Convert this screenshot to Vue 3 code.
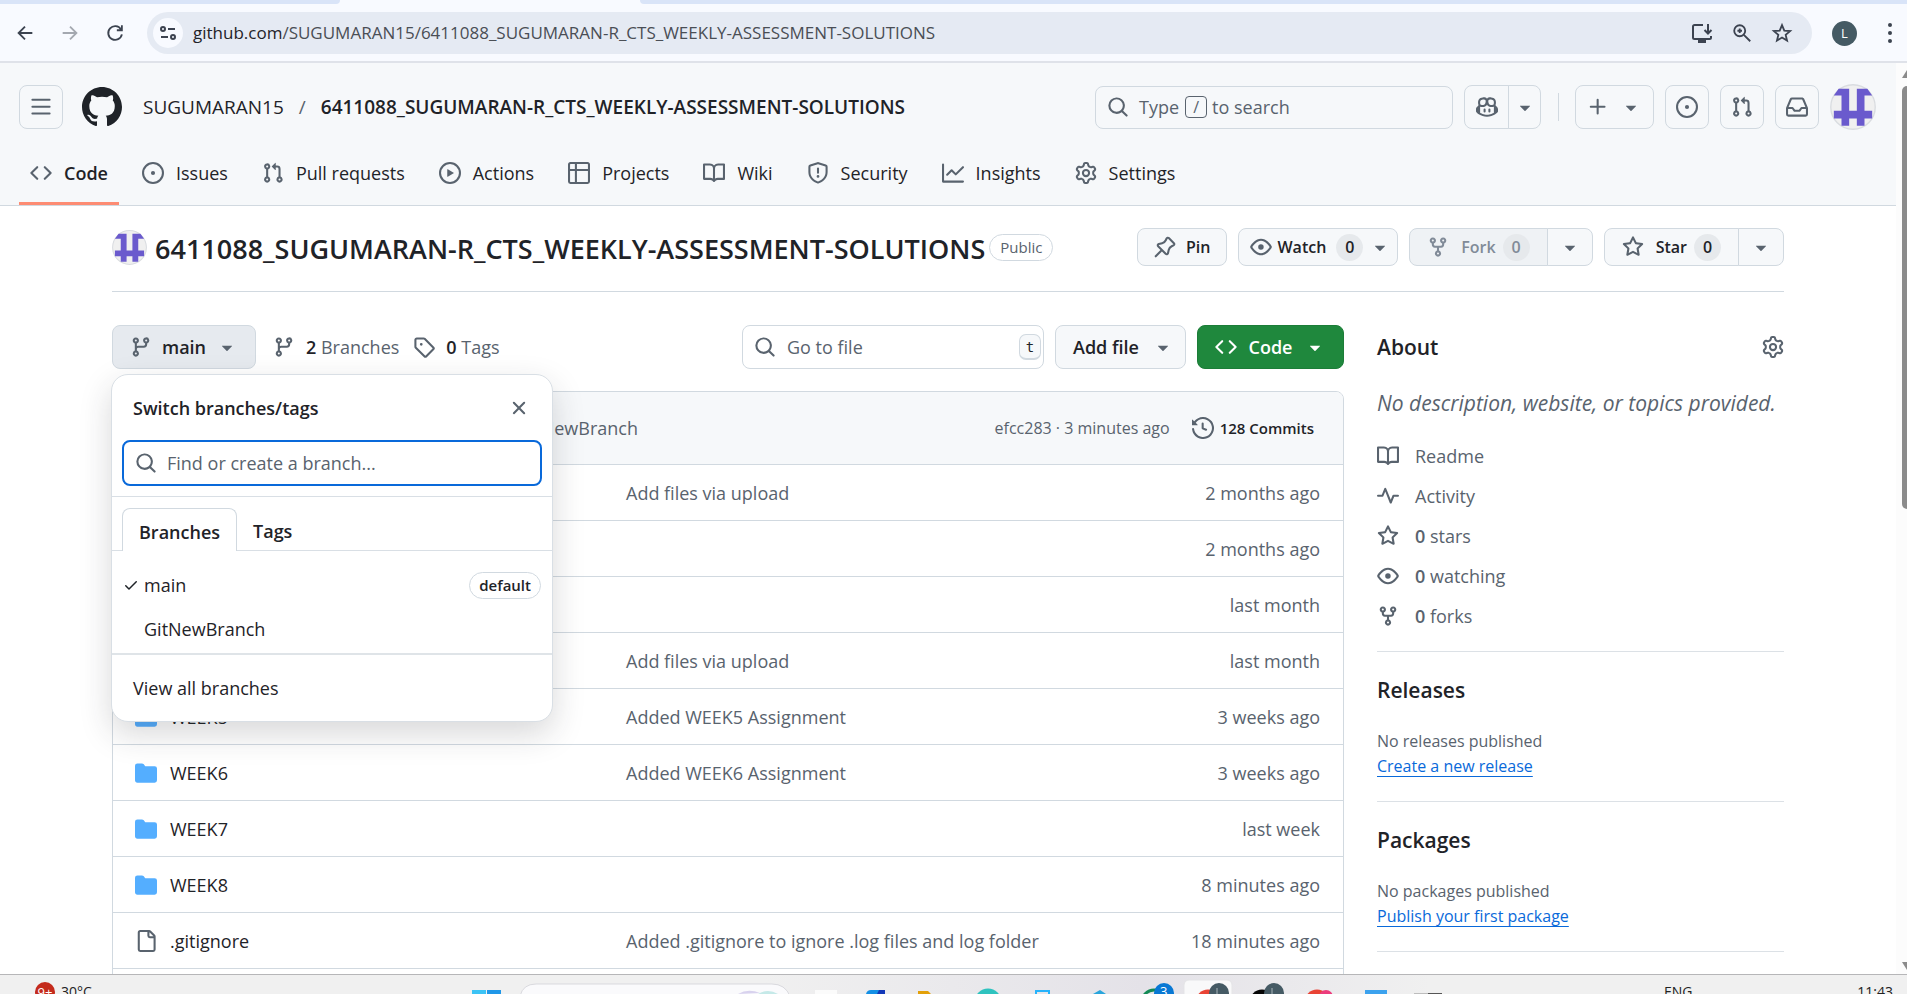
<script setup>
import { h, ref } from 'vue'

const paths = {
  bars: 'M1 2.75A.75.75 0 0 1 1.75 2h12.5a.75.75 0 0 1 0 1.5H1.75A.75.75 0 0 1 1 2.75Zm0 5A.75.75 0 0 1 1.75 7h12.5a.75.75 0 0 1 0 1.5H1.75A.75.75 0 0 1 1 7.75ZM1.75 12h12.5a.75.75 0 0 1 0 1.5H1.75a.75.75 0 0 1 0-1.5Z',
  mark: 'M8 0c4.42 0 8 3.58 8 8a8.013 8.013 0 0 1-5.45 7.59c-.4.08-.55-.17-.55-.38 0-.27.01-1.13.01-2.2 0-.75-.25-1.23-.54-1.48 1.78-.2 3.65-.88 3.65-3.95 0-.88-.31-1.59-.82-2.15.08-.2.36-1.02-.08-2.12 0 0-.67-.22-2.2.82-.64-.18-1.32-.27-2-.27-.68 0-1.36.09-2 .27-1.53-1.03-2.2-.82-2.2-.82-.44 1.1-.16 1.92-.08 2.12-.51.56-.82 1.28-.82 2.15 0 3.06 1.86 3.75 3.64 3.95-.23.2-.44.55-.51 1.07-.46.21-1.61.55-2.33-.66-.15-.24-.6-.83-1.23-.82-.67.01-.27.38.01.53.34.19.73.9.82 1.13.16.45.68 1.31 2.69.94 0 .67.01 1.3.01 1.49 0 .21-.15.45-.55.38A7.995 7.995 0 0 1 0 8c0-4.42 3.58-8 8-8Z',
  code: 'm11.28 3.22 4.25 4.25a.75.75 0 0 1 0 1.06l-4.25 4.25a.749.749 0 0 1-1.275-.326.749.749 0 0 1 .215-.734L13.94 8l-3.72-3.72a.749.749 0 0 1 .326-1.275.749.749 0 0 1 .734.215Zm-6.56 0a.751.751 0 0 1 1.042.018.751.751 0 0 1 .018 1.042L2.06 8l3.72 3.72a.749.749 0 0 1-.326 1.275.749.749 0 0 1-.734-.215L.47 8.53a.75.75 0 0 1 0-1.06Z',
  issue: 'M8 9.5a1.5 1.5 0 1 0 0-3 1.5 1.5 0 0 0 0 3ZM8 0a8 8 0 1 1 0 16A8 8 0 0 1 8 0ZM1.5 8a6.5 6.5 0 1 0 13 0 6.5 6.5 0 0 0-13 0Z',
  pull: 'M1.5 3.25a2.25 2.25 0 1 1 3 2.122v5.256a2.251 2.251 0 1 1-1.5 0V5.372A2.25 2.25 0 0 1 1.5 3.25Zm5.677-.177L9.573.677A.25.25 0 0 1 10 .854V2.5h1A2.5 2.5 0 0 1 13.5 5v5.628a2.251 2.251 0 1 1-1.5 0V5a1 1 0 0 0-1-1h-1v1.646a.25.25 0 0 1-.427.177L7.177 3.427a.25.25 0 0 1 0-.354ZM3.75 2.5a.75.75 0 1 0 0 1.5.75.75 0 0 0 0-1.5Zm0 9.5a.75.75 0 1 0 0 1.5.75.75 0 0 0 0-1.5Zm8.25.75a.75.75 0 1 0 1.5 0 .75.75 0 0 0-1.5 0Z',
  play: 'M8 0a8 8 0 1 1 0 16A8 8 0 0 1 8 0ZM1.5 8a6.5 6.5 0 1 0 13 0 6.5 6.5 0 0 0-13 0Zm4.879-2.773 4.264 2.559a.25.25 0 0 1 0 .428l-4.264 2.559A.25.25 0 0 1 6 10.559V5.442a.25.25 0 0 1 .379-.215Z',
  table: 'M0 1.75C0 .784.784 0 1.75 0h12.5C15.216 0 16 .784 16 1.75v12.5A1.75 1.75 0 0 1 14.25 16H1.75A1.75 1.75 0 0 1 0 14.25ZM6.5 6.5v8h7.75a.25.25 0 0 0 .25-.25V6.5Zm8-1.5V1.75a.25.25 0 0 0-.25-.25H6.5V5Zm-13 1.5v7.75c0 .138.112.25.25.25H5v-8ZM5 5V1.5H1.75a.25.25 0 0 0-.25.25V5Z',
  book: 'M0 1.75A.75.75 0 0 1 .75 1h4.253c1.227 0 2.317.59 3 1.501A3.743 3.743 0 0 1 11.006 1h4.245a.75.75 0 0 1 .75.75v10.5a.75.75 0 0 1-.75.75h-4.507a2.25 2.25 0 0 0-1.591.659l-.622.621a.75.75 0 0 1-1.06 0l-.622-.621A2.25 2.25 0 0 0 5.258 13H.75a.75.75 0 0 1-.75-.75Zm7.251 10.324.004-5.073-.002-2.253A2.25 2.25 0 0 0 5.003 2.5H1.5v9h3.757a3.75 3.75 0 0 1 1.994.574ZM8.755 4.75l-.004 7.322a3.752 3.752 0 0 1 1.992-.572H14.5v-9h-3.495a2.25 2.25 0 0 0-2.25 2.25Z',
  shield: 'M7.467.133a1.748 1.748 0 0 1 1.066 0l5.25 1.68A1.75 1.75 0 0 1 15 3.48V7c0 1.566-.32 3.182-1.303 4.682-.983 1.498-2.585 2.813-5.032 3.855a1.697 1.697 0 0 1-1.33 0c-2.447-1.042-4.049-2.357-5.032-3.855C1.32 10.182 1 8.566 1 7V3.48a1.75 1.75 0 0 1 1.217-1.667Zm.61 1.429a.25.25 0 0 0-.153 0l-5.25 1.68a.25.25 0 0 0-.174.238V7c0 1.358.275 2.666 1.057 3.86.784 1.194 2.121 2.34 4.366 3.297a.196.196 0 0 0 .154 0c2.245-.956 3.582-2.104 4.366-3.298C13.225 9.666 13.5 8.36 13.5 7V3.48a.251.251 0 0 0-.174-.237l-5.25-1.68ZM8.75 4.75v3a.75.75 0 0 1-1.5 0v-3a.75.75 0 0 1 1.5 0ZM9 10.5a1 1 0 1 1-2 0 1 1 0 0 1 2 0Z',
  graph: 'M1.5 1.75V13.5h13.75a.75.75 0 0 1 0 1.5H.75a.75.75 0 0 1-.75-.75V1.75a.75.75 0 0 1 1.5 0Zm14.28 2.53-5.25 5.25a.75.75 0 0 1-1.06 0L7 7.06 4.28 9.78a.751.751 0 0 1-1.042-.018.751.751 0 0 1-.018-1.042l3.25-3.25a.75.75 0 0 1 1.06 0L10 7.94l4.72-4.72a.751.751 0 0 1 1.042.018.751.751 0 0 1 .018 1.042Z',
  gear: 'M8 0a8.2 8.2 0 0 1 .701.031C9.444.095 9.99.645 10.16 1.29l.288 1.107c.018.066.079.158.212.224.231.114.454.243.668.386.123.082.233.09.299.071l1.103-.303c.644-.176 1.392.021 1.82.63.27.385.506.792.704 1.218.315.675.111 1.422-.364 1.891l-.814.806c-.049.048-.098.147-.088.294.016.257.016.515 0 .772-.01.147.038.246.088.294l.814.806c.475.469.679 1.216.364 1.891a7.977 7.977 0 0 1-.704 1.217c-.428.61-1.176.807-1.82.63l-1.102-.302c-.067-.019-.177-.011-.3.071a5.909 5.909 0 0 1-.668.386c-.133.066-.194.158-.211.224l-.29 1.106c-.168.646-.715 1.196-1.458 1.26a8.006 8.006 0 0 1-1.402 0c-.743-.064-1.289-.614-1.458-1.26l-.289-1.106c-.018-.066-.079-.158-.212-.224a5.738 5.738 0 0 1-.668-.386c-.123-.082-.233-.09-.299-.071l-1.103.303c-.644.176-1.392-.021-1.82-.63a8.12 8.12 0 0 1-.704-1.218c-.315-.675-.111-1.422.363-1.891l.815-.806c.05-.048.098-.147.088-.294a6.214 6.214 0 0 1 0-.772c.01-.147-.038-.246-.088-.294l-.815-.806C.635 6.045.431 5.298.746 4.623a7.92 7.92 0 0 1 .704-1.217c.428-.61 1.176-.807 1.82-.63l1.102.302c.067.019.177.011.3-.071.214-.143.437-.272.668-.386.133-.066.194-.158.211-.224l.29-1.106C6.009.645 6.556.095 7.299.03 7.53.01 7.764 0 8 0Zm-.571 1.525c-.036.003-.108.036-.137.146l-.289 1.105c-.147.561-.549.967-.998 1.189-.173.086-.34.183-.5.29-.417.278-.97.423-1.529.27l-1.103-.303c-.109-.03-.175.016-.195.045-.22.312-.412.644-.573.99-.014.031-.021.11.059.19l.815.806c.411.406.562.957.53 1.456a4.709 4.709 0 0 0 0 .582c.032.499-.119 1.05-.53 1.456l-.815.806c-.081.08-.073.159-.059.19.162.346.353.677.573.989.02.03.085.076.195.046l1.102-.303c.56-.153 1.113-.008 1.53.27.161.107.328.204.501.29.447.222.85.629.997 1.189l.289 1.105c.029.109.101.143.137.146a6.6 6.6 0 0 0 1.142 0c.036-.003.108-.036.137-.146l.289-1.105c.147-.561.549-.967.998-1.189.173-.086.34-.183.5-.29.417-.278.97-.423 1.529-.27l1.103.303c.109.029.175-.016.195-.045.22-.313.411-.644.573-.99.014-.031.021-.11-.059-.19l-.815-.806c-.411-.406-.562-.957-.53-1.456a4.709 4.709 0 0 0 0-.582c-.032-.499.119-1.05.53-1.456l.815-.806c.081-.08.073-.159.059-.19a6.464 6.464 0 0 0-.573-.989c-.02-.03-.085-.076-.195-.046l-1.102.303c-.56.153-1.113.008-1.53-.27a4.44 4.44 0 0 0-.501-.29c-.447-.222-.85-.629-.997-1.189l-.289-1.105c-.029-.11-.101-.143-.137-.146a6.6 6.6 0 0 0-1.142 0ZM11 8a3 3 0 1 1-6 0 3 3 0 0 1 6 0ZM9.5 8a1.5 1.5 0 1 0-3.001.001A1.5 1.5 0 0 0 9.5 8Z',
  search: 'M10.68 11.74a6 6 0 0 1-7.922-8.982 6 6 0 0 1 8.982 7.922l3.04 3.04a.749.749 0 0 1-.326 1.275.749.749 0 0 1-.734-.215ZM11.5 7a4.499 4.499 0 1 0-8.997 0A4.499 4.499 0 0 0 11.5 7Z',
  branch: 'M9.5 3.25a2.25 2.25 0 1 1 3 2.122V6A2.5 2.5 0 0 1 10 8.5H6a1 1 0 0 0-1 1v1.128a2.251 2.251 0 1 1-1.5 0V5.372a2.25 2.25 0 1 1 1.5 0v1.836A2.493 2.493 0 0 1 6 7h4a1 1 0 0 0 1-1v-.628A2.25 2.25 0 0 1 9.5 3.25Zm-6 0a.75.75 0 1 0 1.5 0 .75.75 0 0 0-1.5 0Zm8.25-.75a.75.75 0 1 0 0 1.5.75.75 0 0 0 0-1.5ZM4.25 12a.75.75 0 1 0 0 1.5.75.75 0 0 0 0-1.5Z',
  tag: 'M1 7.775V2.75C1 1.784 1.784 1 2.75 1h5.025c.464 0 .91.184 1.238.513l6.25 6.25a1.75 1.75 0 0 1 0 2.474l-5.026 5.026a1.75 1.75 0 0 1-2.474 0l-6.25-6.25A1.752 1.752 0 0 1 1 7.775Zm1.5 0c0 .066.026.13.073.177l6.25 6.25a.25.25 0 0 0 .354 0l5.025-5.025a.25.25 0 0 0 0-.354l-6.25-6.25a.25.25 0 0 0-.177-.073H2.75a.25.25 0 0 0-.25.25ZM6 5a1 1 0 1 1 0 2 1 1 0 0 1 0-2Z',
  fork: 'M5 5.372v.878c0 .414.336.75.75.75h4.5a.75.75 0 0 0 .75-.75v-.878a2.25 2.25 0 1 1 1.5 0v.878a2.25 2.25 0 0 1-2.25 2.25h-1.5v2.128a2.251 2.251 0 1 1-1.5 0V8.5h-1.5A2.25 2.25 0 0 1 3.5 6.25v-.878a2.25 2.25 0 1 1 1.5 0ZM5 3.25a.75.75 0 1 0-1.5 0 .75.75 0 0 0 1.5 0Zm6.75.75a.75.75 0 1 0 0-1.5.75.75 0 0 0 0 1.5Zm-3 8.75a.75.75 0 1 0-1.5 0 .75.75 0 0 0 1.5 0Z',
  eye: 'M8 2c1.981 0 3.671.992 4.933 2.078 1.27 1.091 2.187 2.345 2.637 3.023a1.62 1.62 0 0 1 0 1.798c-.45.678-1.367 1.932-2.637 3.023C11.67 13.008 9.981 14 8 14c-1.981 0-3.671-.992-4.933-2.078C1.797 10.83.88 9.576.43 8.898a1.62 1.62 0 0 1 0-1.798c.45-.677 1.367-1.931 2.637-3.022C4.33 2.992 6.019 2 8 2ZM1.679 7.932a.12.12 0 0 0 0 .136c.411.622 1.241 1.75 2.366 2.717C5.176 11.758 6.527 12.5 8 12.5c1.473 0 2.825-.742 3.955-1.715 1.124-.967 1.954-2.096 2.366-2.717a.12.12 0 0 0 0-.136c-.412-.621-1.242-1.75-2.366-2.717C10.824 4.242 9.473 3.5 8 3.5c-1.473 0-2.825.742-3.955 1.715-1.124.967-1.954 2.096-2.366 2.717ZM8 10a2 2 0 1 1-.001-3.999A2 2 0 0 1 8 10Z',
  star: 'M8 .25a.75.75 0 0 1 .673.418l1.882 3.815 4.21.612a.75.75 0 0 1 .416 1.279l-3.046 2.97.719 4.192a.751.751 0 0 1-1.088.791L8 12.347l-3.766 1.98a.75.75 0 0 1-1.088-.79l.72-4.194L.818 6.374a.75.75 0 0 1 .416-1.28l4.21-.611L7.327.668A.75.75 0 0 1 8 .25Zm0 2.445L6.615 5.5a.75.75 0 0 1-.564.41l-3.097.45 2.24 2.184a.75.75 0 0 1 .216.664l-.528 3.084 2.769-1.456a.75.75 0 0 1 .698 0l2.77 1.456-.53-3.084a.75.75 0 0 1 .216-.664l2.24-2.183-3.096-.45a.75.75 0 0 1-.564-.41L8 2.694Z',
  pulse: 'M6 2c.306 0 .582.187.696.471L10 10.731l1.304-3.26A.751.751 0 0 1 12 7h3.25a.75.75 0 0 1 0 1.5h-2.742l-1.812 4.528a.751.751 0 0 1-1.392 0L6 4.77 4.696 8.03A.75.75 0 0 1 4 8.5H.75a.75.75 0 0 1 0-1.5h2.742l1.812-4.529A.751.751 0 0 1 6 2Z',
  pin: 'm11.294.984 3.722 3.722a1.75 1.75 0 0 1-.504 2.826l-1.327.613a3.089 3.089 0 0 0-1.707 2.084l-.584 2.454c-.317 1.332-1.972 1.8-2.94.832L5.75 11.311 1.78 15.28a.749.749 0 1 1-1.06-1.06l3.969-3.97-2.204-2.204c-.968-.968-.5-2.623.832-2.94l2.454-.584a3.08 3.08 0 0 0 2.084-1.707l.613-1.327a1.75 1.75 0 0 1 2.826-.504ZM6.283 9.723l2.732 2.731a.25.25 0 0 0 .42-.119l.584-2.454a4.586 4.586 0 0 1 2.537-3.098l1.328-.613a.25.25 0 0 0 .072-.404l-3.722-3.722a.25.25 0 0 0-.404.072l-.613 1.328a4.584 4.584 0 0 1-3.098 2.537l-2.454.584a.25.25 0 0 0-.119.42l2.731 2.732Z',
  inbox: 'M2.8 2.06A1.75 1.75 0 0 1 4.41 1h7.18c.7 0 1.333.417 1.61 1.06l2.74 6.395c.04.093.06.194.06.295v4.5A1.75 1.75 0 0 1 14.25 15H1.75A1.75 1.75 0 0 1 0 13.25v-4.5c0-.101.02-.202.06-.295Zm1.61.44a.25.25 0 0 0-.23.152L1.887 8H4.75a.75.75 0 0 1 .6.3L6.625 10h2.75l1.275-1.7a.75.75 0 0 1 .6-.3h2.863L11.82 2.652a.25.25 0 0 0-.23-.152Zm10.09 7h-2.875l-1.275 1.7a.75.75 0 0 1-.6.3h-3.5a.75.75 0 0 1-.6-.3L4.375 9.5H1.5v3.75c0 .138.112.25.25.25h12.5a.25.25 0 0 0 .25-.25Z',
  history: 'm.427 1.927 1.215 1.215a8.002 8.002 0 1 1-1.6 5.685.75.75 0 1 1 1.493-.154 6.5 6.5 0 1 0 1.18-4.458l1.358 1.358A.25.25 0 0 1 3.896 6H.25A.25.25 0 0 1 0 5.75V2.104a.25.25 0 0 1 .427-.177ZM7.75 4a.75.75 0 0 1 .75.75v2.992l2.028.812a.75.75 0 0 1-.557 1.392l-2.5-1A.751.751 0 0 1 7 8.25v-3.5A.75.75 0 0 1 7.75 4Z',
  folder: 'M1.75 1A1.75 1.75 0 0 0 0 2.75v10.5C0 14.216.784 15 1.75 15h12.5A1.75 1.75 0 0 0 16 13.25v-8.5A1.75 1.75 0 0 0 14.25 3H7.5a.25.25 0 0 1-.2-.1l-.9-1.2C6.07 1.26 5.55 1 5 1H1.75Z',
  file: 'M2 1.75C2 .784 2.784 0 3.75 0h6.586c.464 0 .909.184 1.237.513l2.914 2.914c.329.328.513.773.513 1.237v9.586A1.75 1.75 0 0 1 13.25 16h-9.5A1.75 1.75 0 0 1 2 14.25Zm1.75-.25a.25.25 0 0 0-.25.25v12.5c0 .138.112.25.25.25h9.5a.25.25 0 0 0 .25-.25V6h-2.75A1.75 1.75 0 0 1 9 4.25V1.5Zm6.75.062V4.25c0 .138.112.25.25.25h2.688l-.011-.013-2.914-2.914-.013-.011Z',
  close: 'M3.72 3.72a.75.75 0 0 1 1.06 0L8 6.94l3.22-3.22a.749.749 0 0 1 1.275.326.749.749 0 0 1-.215.734L9.06 8l3.22 3.22a.749.749 0 0 1-.326 1.275.749.749 0 0 1-.734-.215L8 9.06l-3.22 3.22a.751.751 0 0 1-1.042-.018.751.751 0 0 1-.018-1.042L6.94 8 3.72 4.78a.75.75 0 0 1 0-1.06Z',
  check: 'M13.78 4.22a.75.75 0 0 1 0 1.06l-7.25 7.25a.75.75 0 0 1-1.06 0L2.22 9.28a.751.751 0 0 1 .018-1.042.751.751 0 0 1 1.042-.018L6 10.94l6.72-6.72a.75.75 0 0 1 1.06 0Z',
  caret: 'm4.427 7.427 3.396 3.396a.25.25 0 0 0 .354 0l3.396-3.396A.25.25 0 0 0 11.396 7H4.604a.25.25 0 0 0-.177.427Z',
  plus: 'M7.75 2a.75.75 0 0 1 .75.75V7h4.25a.75.75 0 0 1 0 1.5H8.5v4.25a.75.75 0 0 1-1.5 0V8.5H2.75a.75.75 0 0 1 0-1.5H7V2.75A.75.75 0 0 1 7.75 2Z',
  copilot: 'M7.998 15.035c-4.562 0-7.873-2.914-7.998-3.749V9.338c.085-.628.677-1.686 1.588-2.065.013-.07.024-.143.036-.218.029-.183.06-.384.126-.612-.201-.508-.254-1.084-.254-1.656 0-.87.128-1.769.693-2.484.579-.733 1.494-1.124 2.724-1.261 1.206-.134 2.262.034 2.944.765.05.053.096.108.139.165.044-.057.094-.112.143-.165.682-.731 1.738-.899 2.944-.765 1.23.137 2.145.528 2.724 1.261.566.715.693 1.614.693 2.484 0 .572-.053 1.148-.254 1.656.066.228.098.429.126.612.012.076.024.148.037.218.924.385 1.522 1.471 1.591 2.095v1.872c0 .766-3.351 3.795-8.002 3.795Zm0-1.485c2.28 0 4.584-1.11 5.002-1.433V7.862l-.023-.116c-.49.21-1.075.291-1.727.291-1.146 0-2.059-.327-2.71-.991A3.222 3.222 0 0 1 8 6.303a3.24 3.24 0 0 1-.544.743c-.65.664-1.563.991-2.71.991-.652 0-1.236-.081-1.727-.291l-.023.116v4.255c.419.323 2.722 1.433 5.002 1.433ZM6.762 2.83c-.193-.206-.637-.413-1.682-.297-1.019.113-1.479.404-1.713.7-.247.312-.369.789-.369 1.554 0 .793.129 1.171.308 1.371.162.181.519.379 1.442.379.853 0 1.339-.235 1.638-.54.315-.322.527-.827.617-1.553.117-.935-.037-1.395-.241-1.614Zm4.155-.297c-1.044-.116-1.488.091-1.681.297-.204.219-.359.679-.242 1.614.091.726.303 1.231.618 1.553.299.305.784.54 1.638.54.922 0 1.28-.198 1.442-.379.179-.2.308-.578.308-1.371 0-.765-.123-1.242-.37-1.554-.233-.296-.693-.587-1.713-.7ZM6.25 9.037a.75.75 0 0 1 .75.75v1.501a.75.75 0 0 1-1.5 0V9.787a.75.75 0 0 1 .75-.75Zm4.25.75v1.501a.75.75 0 0 1-1.5 0V9.787a.75.75 0 0 1 1.5 0Z',
}

const Icon = (props) =>
  h('svg', { viewBox: '0 0 16 16', width: props.size || 22, height: props.size || 22, fill: 'currentColor', 'aria-hidden': 'true' }, [
    h('path', { d: paths[props.name] }),
  ])
Icon.props = ['name', 'size']

const Identicon = () =>
  h('svg', { viewBox: '0 0 24 24', 'aria-hidden': 'true' }, [
    h('circle', { cx: 12, cy: 12, r: 11.6, fill: '#f0f0f0', stroke: '#d9dce0', 'stroke-width': 0.7 }),
    h('path', { fill: '#6a5acd', d: 'M4.5 2.5H10V14h4V2.5h5.5L22 6H18v8h4v4h-4v3.8h-4V18h-4v3.8H6V18H2v-4h4V6H2Z' }),
  ])

const tabs = [
  ['code', 'Code'], ['issue', 'Issues'], ['pull', 'Pull requests'], ['play', 'Actions'], ['table', 'Projects'],
  ['book', 'Wiki'], ['shield', 'Security'], ['graph', 'Insights'], ['gear', 'Settings'],
]

const files = [
  ['folder', 'WEEK1', 'Add files via upload', '2 months ago'],
  ['folder', 'WEEK2', '', '2 months ago'],
  ['folder', 'WEEK3', '', 'last month'],
  ['folder', 'WEEK4', 'Add files via upload', 'last month'],
  ['folder', 'WEEK5', 'Added WEEK5 Assignment', '3 weeks ago'],
  ['folder', 'WEEK6', 'Added WEEK6 Assignment', '3 weeks ago'],
  ['folder', 'WEEK7', '', 'last week'],
  ['folder', 'WEEK8', '', '8 minutes ago'],
  ['file', '.gitignore', 'Added .gitignore to ignore .log files and log folder', '18 minutes ago'],
  ['file', 'README.md', '', ''],
]

const facts = [
  ['book', '', 'Readme'], ['pulse', '', 'Activity'], ['star', '0', 'stars'], ['eye', '0', 'watching'], ['fork', '0', 'forks'],
]

const repo = '6411088_SUGUMARAN-R_CTS_WEEKLY-ASSESSMENT-SOLUTIONS'
const branchQuery = ref('')
const fileQuery = ref('')
</script>

<template>
  <div class="screen">
    <div class="tabstrip"><span class="strip-left"></span><span class="strip-tab"></span><span class="strip-right"></span></div>
    <div class="browser-bar">
      <button class="nav-btn" aria-label="Back"><svg viewBox="0 0 24 24" width="22" height="22" class="line"><path d="M20 12H5M12 5l-7 7 7 7" /></svg></button>
      <button class="nav-btn dim" aria-label="Forward"><svg viewBox="0 0 24 24" width="22" height="22" class="line"><path d="M4 12h15M12 5l7 7-7 7" /></svg></button>
      <button class="nav-btn" aria-label="Reload"><svg viewBox="0 0 24 24" width="22" height="22" class="line"><path d="M18.5 8A7.5 7.5 0 1 0 19.500 13.500M19.500 3.500V9H14" /></svg></button>
      <div class="omnibox">
        <button class="site-info" aria-label="Site information"><svg viewBox="0 0 18 18" width="18" height="18" class="line"><circle cx="4" cy="5" r="2" /><path d="M9 5h7M2 13h7" /><circle cx="14" cy="13" r="2" /></svg></button>
        <span class="url"><b>github.com</b>/SUGUMARAN15/{{ repo }}</span>
        <button class="omni-btn" aria-label="Install"><svg viewBox="0 0 24 24" width="24" height="24" class="line"><path d="M13 4H4.500a1.500 1.500 0 0 0-1.500 1.500v11A1.500 1.500 0 0 0 4.500 18h15a1.500 1.500 0 0 0 1.500-1.500V15M18 3v9M14.500 9l3.500 3.500L21.500 9" /><path d="M9 18h6v3H9z" fill="currentColor" /></svg></button>
        <button class="omni-btn" aria-label="Zoom"><svg viewBox="0 0 24 24" width="22" height="22" class="line"><circle cx="9.500" cy="9.500" r="6" /><path d="M14 14l7 7M9.500 7v5M7 9.500h5" /></svg></button>
        <button class="omni-btn" aria-label="Bookmark"><svg viewBox="0 0 24 24" width="22" height="22" class="line"><path d="M12 3.500l2.500 5.900 6.400.5-4.900 4.200 1.500 6.200L12 17l-5.500 3.300L8 14.100 3.100 9.900l6.400-.5z" /></svg></button>
      </div>
      <button class="profile" aria-label="Profile">L</button>
      <button class="dots" aria-label="Menu"><i></i><i></i><i></i></button>
    </div>

    <div class="viewport">
      <div class="page">
        <header class="site-header">
          <div class="top-row">
            <button class="square" aria-label="Open menu"><Icon name="bars" /></button>
            <a class="logo" href="#" aria-label="GitHub"><Icon name="mark" :size="40" /></a>
            <nav class="crumbs" aria-label="Breadcrumb">
              <a href="#">SUGUMARAN15</a><span class="slash">/</span><a href="#" class="strong">{{ repo }}</a>
            </nav>
            <button class="site-search"><Icon name="search" /><span>Type</span><kbd>/</kbd><span>to search</span></button>
            <div class="split">
              <button class="copilot" aria-label="Copilot"><Icon name="copilot" /></button>
              <button class="split-caret" aria-label="Copilot menu"><Icon name="caret" /></button>
            </div>
            <span class="rule"></span>
            <button class="create" aria-label="Create new"><Icon name="plus" /><Icon name="caret" /></button>
            <button class="square" aria-label="Issues"><Icon name="issue" /></button>
            <button class="square" aria-label="Pull requests"><Icon name="pull" /></button>
            <button class="square" aria-label="Inbox"><Icon name="inbox" /></button>
            <button class="user" aria-label="User menu"><Identicon /></button>
          </div>
          <nav class="repo-tabs" aria-label="Repository">
            <a v-for="([icon, label], i) in tabs" :key="label" href="#" :class="{ active: i === 0 }"><Icon :name="icon" />{{ label }}</a>
          </nav>
        </header>

        <main class="content">
          <div class="title-row">
            <Identicon class="owner" />
            <h1>{{ repo }}</h1>
            <span class="pill muted">Public</span>
            <div class="actions">
              <button class="btn pin"><Icon name="pin" /><span>Pin</span></button>
              <button class="btn watch"><Icon name="eye" /><span>Watch</span><span class="count">0</span><Icon name="caret" /></button>
              <div class="pair">
                <button class="btn off" disabled><Icon name="fork" /><span>Fork</span><span class="count">0</span></button>
                <button class="btn more" aria-label="Fork options"><Icon name="caret" /></button>
              </div>
              <div class="pair">
                <button class="btn"><Icon name="star" /><span>Star</span><span class="count">0</span></button>
                <button class="btn more" aria-label="Star options"><Icon name="caret" /></button>
              </div>
            </div>
          </div>

          <div class="columns">
            <section class="main-col">
              <div class="file-bar">
                <div class="branch-picker">
                  <button class="tool branch-btn"><Icon name="branch" /><span>main</span><Icon name="caret" /></button>
                  <div class="menu" role="dialog" aria-label="Switch branches/tags">
                    <div class="menu-head"><strong>Switch branches/tags</strong><button aria-label="Close"><Icon name="close" /></button></div>
                    <label class="menu-search"><Icon name="search" /><input v-model="branchQuery" type="text" placeholder="Find or create a branch..." aria-label="Find or create a branch" /></label>
                    <div class="menu-tabs"><button class="on">Branches</button><button>Tags</button></div>
                    <div class="menu-list">
                      <button><span class="tick"><Icon name="check" :size="16" /></span><span class="grow">main</span><span class="pill">default</span></button>
                      <button><span class="tick"></span><span class="grow">GitNewBranch</span></button>
                    </div>
                    <a class="menu-foot" href="#">View all branches</a>
                  </div>
                </div>
                <a class="stat" href="#"><Icon name="branch" /><span><b>2</b> Branches</span></a>
                <a class="stat tags" href="#"><Icon name="tag" /><span><b>0</b> Tags</span></a>
                <label class="go-file"><Icon name="search" /><input v-model="fileQuery" type="text" placeholder="Go to file" aria-label="Go to file" /><kbd>t</kbd></label>
                <button class="tool add">Add file<Icon name="caret" /></button>
                <button class="tool green"><Icon name="code" /><span>Code</span><Icon name="caret" /></button>
              </div>

              <div class="files">
                <div class="commit">
                  <a class="commit-msg" href="#">GitNewBranch</a>
                  <span class="hash">efcc283 · 3 minutes ago</span>
                  <a class="commits" href="#"><Icon name="history" />128 Commits</a>
                </div>
                <table>
                  <tbody>
                    <tr v-for="[icon, name, message, age] in files" :key="name">
                      <td class="name"><a href="#"><Icon :name="icon" :class="icon" />{{ name }}</a></td>
                      <td class="message">{{ message }}</td>
                      <td class="age">{{ age }}</td>
                    </tr>
                  </tbody>
                </table>
              </div>
            </section>

            <aside class="side">
              <section class="about">
                <div class="about-head"><h2>About</h2><button aria-label="Edit repository details"><Icon name="gear" /></button></div>
                <p class="description">No description, website, or topics provided.</p>
                <ul>
                  <li v-for="[icon, n, label] in facts" :key="label"><a href="#"><Icon :name="icon" /><span><b v-if="n">{{ n }}&nbsp;</b>{{ label }}</span></a></li>
                </ul>
              </section>
              <section class="block"><h2>Releases</h2><p>No releases published</p><p><a href="#">Create a new release</a></p></section>
              <section class="block"><h2>Packages</h2><p>No packages published</p><p><a href="#">Publish your first package</a></p></section>
            </aside>
          </div>
        </main>
      </div>
      <div class="scrollbar">
        <svg viewBox="0 0 10 8" width="10" height="8"><path d="M5 0l5 8H0z" /></svg>
        <span class="thumb"></span>
        <svg viewBox="0 0 10 8" width="10" height="8"><path d="M5 8l5-8H0z" /></svg>
      </div>
    </div>

    <footer class="taskbar">
      <div class="weather"><span class="alert">9+</span><span>30°C</span></div>
      <svg class="apps" viewBox="472 975 972 19" width="972" height="19" aria-hidden="true">
        <path fill="#3cc3f5" d="M472 990h14v4h-14z" /><path fill="#1f97e8" d="M487 990h14v4h-14z" />
        <path d="M520 996q3-12 16-12h236q13 0 18 12" fill="#fafafc" stroke="#d9d9de" />
        <path d="M738 994q10-6 22-1z" fill="#d8d2ee" /><path d="M758 994q10-6 20 0z" fill="#c5e9e8" />
        <path fill="#fbfbfb" d="M815 990h22v4h-22z" />
        <path fill="#1490e5" d="M866 994q1-4 5-4h14v4z" /><path fill="#1238b8" d="M879 990h6v4h-8z" />
        <path fill="#e3a008" d="M918 991h10l3 3h-13z" />
        <circle cx="988" cy="1002" r="13.500" fill="#2fc3bf" />
        <path d="M1036 995v-4h13v4" fill="none" stroke="#27b3fb" stroke-width="2" />
        <path fill="#29a5dc" d="M1093 994l7-4 6 4z" />
        <circle cx="1154" cy="1002" r="12" fill="none" stroke="#138a55" stroke-width="3" />
        <circle cx="1164" cy="993" r="10" fill="#0878d4" /><text x="1160" y="996" fill="#fff" font-size="13">3</text>
        <rect x="1184" y="980" width="48" height="22" rx="5" fill="#f9f9fa" stroke="#e5e5e7" />
        <circle cx="1208" cy="1002" r="12.500" fill="#e94335" /><circle cx="1219" cy="993" r="10" fill="#455a64" /><path stroke="#a9b4b9" d="M1217 988v7" />
        <circle cx="1262" cy="1002" r="12.500" fill="#050505" /><circle cx="1274" cy="993" r="10" fill="#455a64" /><path stroke="#a9b4b9" d="M1272 988v7" />
        <circle cx="1317" cy="1002" r="12.500" fill="#e94335" /><circle cx="1326" cy="997" r="7" fill="#ec3c7c" />
        <path fill="#3ca2ee" d="M1365 990h22v4h-22z" />
        <path fill="#bdbdbd" d="M1414 993h14v1h-14z" /><path fill="#555" d="M1428 993h14v1h-14z" />
      </svg>
      <div class="tray"><span>ENG</span><span>11:43</span></div>
    </footer>
  </div>
</template>

<style>
body { margin: 0; background: #fff; }
</style>

<style scoped>
* { box-sizing: border-box; }
svg { display: block; flex: none; }
button, input { font: inherit; color: inherit; background: none; border: 0; padding: 0; margin: 0; }
a { color: inherit; text-decoration: none; }
h1, h2, p, ul { margin: 0; padding: 0; font-weight: inherit; }
ul { list-style: none; }
.line { fill: none; stroke: currentColor; stroke-width: 2; }

.screen { display: flex; flex-direction: column; height: 100vh; overflow: hidden; font-family: "Open Sans", "Noto Sans", sans-serif; font-size: 18px; line-height: 28px; color: #1f2328; }

.tabstrip { display: flex; height: 4px; background: #f8faff; }
.strip-left { width: 340px; background: #d9e4f8; border-bottom-right-radius: 8px; }
.strip-tab { width: 300px; }
.strip-right { flex: 1; background: #d9e4f8; border-bottom-left-radius: 8px; }
.browser-bar { display: flex; align-items: center; height: 59px; padding: 6px 8px 5px 14px; border-bottom: 2px solid #dfe2e9; background: #f8faff; color: #3c4350; }
.nav-btn { width: 22px; margin-right: 23px; }
.dim { color: #a4a8b0; }
.omnibox { flex: 1; display: flex; align-items: center; height: 42px; margin-left: -2px; padding: 0 18px 0 6px; border-radius: 21px; background: #e5eaf3; }
.site-info { display: grid; place-items: center; width: 30px; height: 30px; margin-right: 10px; border-radius: 50%; background: #f8faff; }
.url { flex: 1; color: #4a4e55; font-size: 17px; }
.url b { font-weight: 400; color: #1f2328; }
.omni-btn { display: grid; place-items: center; width: 24px; margin-left: 16px; }
.profile { width: 25px; height: 25px; margin: 0 24px 0 20px; border-radius: 50%; background: #455a64; color: #fff; font-size: 13px; line-height: 25px; }
.dots { display: grid; gap: 4px; width: 18px; justify-items: center; }
.dots i { width: 4px; height: 4px; border-radius: 50%; background: #3c4350; }

.viewport { flex: 1; display: flex; min-height: 0; }
.page { flex: 1; min-width: 0; overflow: hidden; }
.scrollbar { display: flex; flex-direction: column; width: 11px; padding: 7px 0 4px 6px; overflow: hidden; background: #fcfcfc; fill: #8b8b8b; }
.scrollbar svg:last-child { margin-top: auto; }
.thumb { width: 10px; height: 47%; margin-top: 8px; border-radius: 5px; background: #8b8b8b; }

.site-header { padding: 22px 20px 0 19px; background: #f6f8fa; border-bottom: 1px solid #d1d9e0; color: #1f2328; }
.top-row { display: flex; align-items: center; height: 44px; }
.top-row button { border: 1px solid #d1d9e0; border-radius: 8px; color: #59636e; }
.square { display: grid; place-items: center; width: 44px; height: 44px; }
.square + .square { margin-left: 11px; }
.logo { margin: 0 21px 0 19px; }
.crumbs { display: flex; flex: 1; font-size: 19px; white-space: nowrap; }
.slash { margin: 0 15px; color: #59636e; }
.strong { font-weight: 600; }
.top-row .site-search { display: flex; align-items: center; width: 358px; height: 43px; padding-left: 11px; }
.site-search svg { margin-right: 10px; }
.site-search kbd { width: 22px; height: 22px; margin: 0 5px 0 6px; border: 1px solid #59636e; border-radius: 4px; font: inherit; font-size: 16px; line-height: 20px; text-align: center; }
.split { display: flex; margin-left: 11px; height: 44px; }
.split button { display: grid; place-items: center; }
.top-row .copilot { width: 45px; border-radius: 8px 0 0 8px; }
.top-row .split-caret { width: 33px; margin-left: -1px; border-radius: 0 8px 8px 0; }
.rule { width: 1px; height: 28px; margin: 0 16px 0 17px; background: #d1d9e0; }
.create { display: flex; align-items: center; justify-content: space-between; width: 79px; height: 44px; padding: 0 11px; }
.create + .square { margin-left: 11px; }
.top-row .user { width: 46px; height: 46px; margin-left: 11px; border: 0; }
.repo-tabs { display: flex; gap: 12px; margin-top: 11px; }
.repo-tabs a { display: flex; align-items: center; gap: 12px; height: 65px; padding: 0 11px; white-space: nowrap; }
.repo-tabs svg { color: #59636e; }
.repo-tabs .active { font-weight: 600; box-shadow: inset 0 -3px #fd8c73; }

.content { padding: 0 112px; }
.title-row { display: flex; align-items: center; padding: 22px 0 25px; border-bottom: 1px solid #d1d9e0; height: 86px; }
.owner { width: 35px; height: 35px; margin-right: 8px; }
h1 { padding-top: 4px; font-size: 27px; font-weight: 600; line-height: 38px; white-space: nowrap; }
.pill { height: 27px; margin-left: 4px; padding: 0 9px; border: 1px solid #d1d9e0; border-radius: 14px; font-size: 15px; font-weight: 600; line-height: 25px; }
.muted { padding: 0 10px; color: #59636e; font-weight: 500; }
.actions { display: flex; gap: 11px; margin-left: auto; font-size: 16px; font-weight: 600; }
.btn { display: flex; align-items: center; height: 38px; padding: 0 17px; border: 1px solid #d1d9e0; border-radius: 8px; background: #f6f8fa; }
.btn svg { margin-right: 12px; color: #59636e; }
.pin { padding: 0 16px; }
.pin svg { margin-right: 10px; }
.watch { padding: 0 6px 0 11px; }
.watch svg { margin-right: 5px; }
.watch .count { margin-left: 10px; }
.watch .count + svg { margin: 0 0 0 6px; }
.count { min-width: 27px; height: 27px; margin-left: 7px; border-radius: 14px; background: #e6e9ec; line-height: 27px; text-align: center; }
.pair { display: flex; }
.pair .btn:first-child { border-radius: 8px 0 0 8px; }
.pair .more { width: 46px; margin-left: -1px; padding: 0 11px; border-radius: 0 8px 8px 0; }
.off, .off svg { color: #818b98; }
.off { background: #eff2f5; }

.columns { display: flex; gap: 33px; padding-top: 33px; }
.main-col { flex: 1; min-width: 0; }
.side { width: 407px; flex: none; }

.file-bar { display: flex; align-items: center; height: 44px; }
.tool { display: flex; align-items: center; height: 44px; border: 1px solid #d1d9e0; border-radius: 8px; background: #f6f8fa; font-weight: 600; white-space: nowrap; }
.tool svg { color: #59636e; }
.branch-picker { position: relative; }
.branch-btn { width: 144px; padding: 0 17px; background: #e6eaef; justify-content: space-between; }
.stat { display: flex; align-items: center; gap: 11px; margin-left: 17px; color: #59636e; font-weight: 500; white-space: nowrap; }
.stat b { font-weight: 600; color: #1f2328; }
.tags { margin-left: 14px; }
.go-file { display: flex; align-items: center; width: 302px; height: 44px; margin-left: auto; padding: 0 2px 0 11px; border: 1px solid #d1d9e0; border-radius: 8px; color: #59636e; }
.go-file input { flex: 1; min-width: 0; margin-left: 11px; }
input { outline: 0; }
input::placeholder { color: #59636e; opacity: 1; }
.go-file kbd { width: 22px; height: 26px; border: 1px solid #d1d9e0; border-bottom-width: 2px; border-radius: 7px; background: #f6f8fa; color: #1f2328; font: 14px/24px "DejaVu Sans Mono", monospace; text-align: center; }
.add { width: 131px; justify-content: space-between; margin-left: 11px; padding: 0 11px 0 17px; }
.green { width: 147px; justify-content: space-between; margin-left: 11px; padding: 0 17px; background: #1f883d; border-color: #1c7d38; color: #fff; }
.green svg { color: #fff; }

.menu { position: absolute; z-index: 2; top: 49px; left: -1px; width: 442px; border: 1px solid #d9dfe5; border-radius: 17px; background: #fff; box-shadow: 0 12px 32px rgba(37, 41, 46, .18); overflow: hidden; }
.menu-head { display: flex; align-items: center; justify-content: space-between; height: 65px; padding: 0 22px 0 21px; }
.menu-head strong { font-weight: 600; }
.menu-head button { color: #59636e; }
.menu-search { display: flex; align-items: center; height: 46px; margin: 0 10px 10px; padding: 0 11px; border: 2px solid #0969da; border-radius: 8px; color: #59636e; }
.menu-search input { flex: 1; margin-left: 10px; }
.menu-tabs { display: flex; height: 55px; padding: 11px 10px 0; border-top: 1px solid #d9dfe5; border-bottom: 1px solid #d9dfe5; font-weight: 600; }
.menu-tabs button { height: 43px; padding: 3px 16px 0; }
.menu-tabs .on { border: 1px solid #d1d9e0; border-bottom: 0; border-radius: 8px 8px 0 0; background: #fff; }
.menu-list { padding: 12px 0 2px; border-bottom: 2px solid #dfe4e8; }
.menu-list button { display: flex; align-items: center; width: 100%; height: 44px; padding: 0 11px; text-align: left; }
.menu-list .tick { width: 21px; }
.grow { flex: 1; }
.menu-foot { display: block; padding: 19px 21px; }

.files { margin-top: 22px; border: 1px solid #d1d9e0; border-radius: 8px; overflow: hidden; }
.commit { display: flex; align-items: center; height: 72px; padding-right: 29px; background: #f6f8fa; color: #59636e; }
.commit-msg { width: 525px; text-align: right; }
.hash { margin-left: auto; font-size: 16px; }
.commits { display: flex; align-items: center; gap: 6px; margin-left: 22px; font-size: 15px; font-weight: 600; color: #1f2328; }
.commits svg { color: #59636e; }
table { width: 100%; border-collapse: separate; border-spacing: 0; table-layout: fixed; }
td { height: 56px; padding: 0; border-top: 1px solid #d1d9e0; color: #59636e; white-space: nowrap; }
.name { width: 513px; padding-left: 22px; }
.name a { display: flex; align-items: center; gap: 13px; color: #1f2328; }
.folder { color: #54aeff; }
.file { color: #59636e; }
.age { width: 180px; padding-right: 23px; text-align: right; }

.about { padding-bottom: 15px; border-bottom: 1px solid #dce1e6; color: #59636e; }
.about-head { display: flex; align-items: center; justify-content: space-between; height: 44px; }
.about-head button { color: #59636e; }
h2 { font-size: 21px; font-weight: 600; line-height: 33px; color: #1f2328; }
.description { margin: 18px 0 16px; font-size: 21px; font-style: italic; line-height: 33px; white-space: nowrap; }
.about li a { display: flex; align-items: center; gap: 16px; height: 40px; }
.about b { font-weight: 600; }
.block { padding: 22px 0; border-bottom: 1px solid #dce1e6; color: #59636e; font-size: 16px; line-height: 25px; }
.block h2 { margin-bottom: 22px; }
.block a { color: #0969da; text-decoration: underline; text-underline-offset: 4px; }

.taskbar { display: flex; height: 20px; overflow: hidden; border-top: 1px solid #b6b6b8; background: linear-gradient(90deg, #f0f0f0 40%, #e4e2e8 60%, #f0f0f0 75%); color: #222; font-size: 14px; line-height: 34px; }
.weather { display: flex; gap: 6px; width: 472px; padding-left: 35px; }
.alert { width: 20px; height: 20px; margin-top: 7px; border-radius: 50%; background: #c42b1c; color: #fff; font-size: 13px; line-height: 20px; text-align: center; }
.tray { display: flex; flex: 1; justify-content: space-between; padding: 0 14px 0 220px; }
</style>
